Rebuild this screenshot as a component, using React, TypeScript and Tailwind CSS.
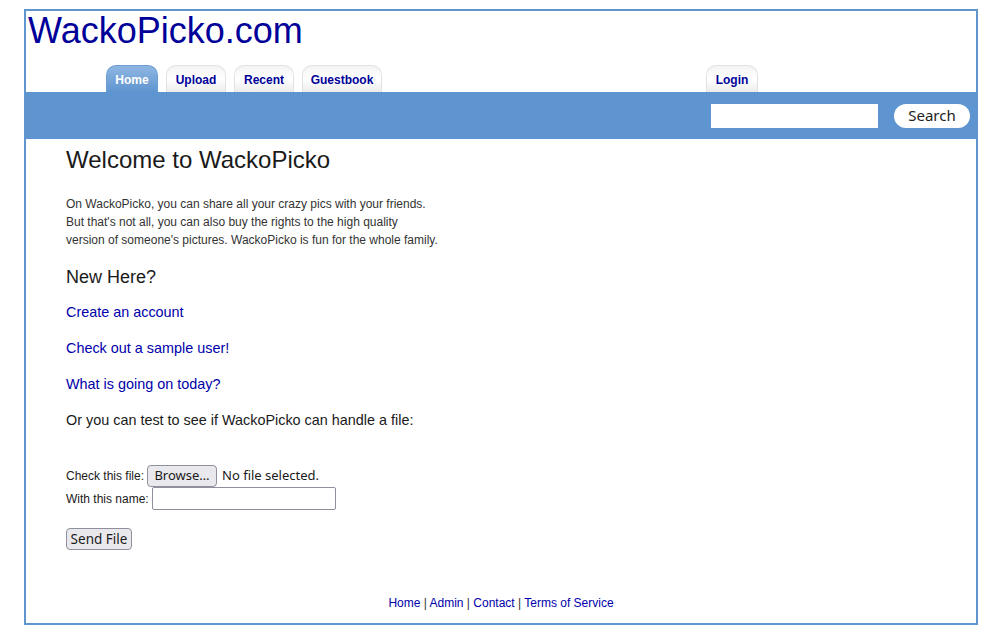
import React from "react";

const sans = { fontFamily: '"Liberation Sans", Arial, sans-serif' };
const ui = { fontFamily: '"Noto Sans", "Open Sans", sans-serif' };

function Tab({ label, active, w }: { label: string; active?: boolean; w: string }) {
  return (
    <div
      className={
        "h-[27px] rounded-t-[10px] flex items-center justify-center text-[12px] font-bold border border-b-0 " +
        w +
        " " +
        (active
          ? "bg-gradient-to-b from-[#8fb6e2] to-[#5e95d0] text-white border-[#6e9fd4]"
          : "bg-gradient-to-b from-[#f4f4f4] via-white to-[#ececec] text-[#000099] border-[#e2e2e2]")
      }
      style={sans}
    >
      <span className="pt-[1px]">{label}</span>
    </div>
  );
}

export default function App() {
  return (
    <div className="bg-white min-h-[631px] pt-[9px] pl-[24px]" style={sans}>
      <div className="w-[954px] h-[616px] border-2 border-[#5f96d0] flex flex-col">
        {/* Header */}
        <div className="h-[81px] flex flex-col">
          <div className="text-[36px] leading-[40px] text-[#000099] pl-[2px]">WackoPicko.com</div>
          <div className="mt-auto flex items-end">
            <div className="ml-[80px] flex gap-[8px]">
              <Tab label="Home" active w="w-[52px]" />
              <Tab label="Upload" w="w-[60px]" />
              <Tab label="Recent" w="w-[60px]" />
              <Tab label="Guestbook" w="w-[80px]" />
            </div>
            <div className="ml-[324px]">
              <Tab label="Login" w="w-[52px]" />
            </div>
          </div>
        </div>

        {/* Blue bar */}
        <div className="h-[47px] bg-[#5e95d0] flex items-center justify-end pr-[6px] gap-[16px]">
          <div className="w-[167px] h-[24px] bg-white"></div>
          <div
            className="w-[76px] h-[24px] rounded-full bg-white flex items-center justify-center text-[15px] text-[#222]"
            style={ui}
          >
            Search
          </div>
        </div>

        {/* Content */}
        <div className="pl-[40px] pt-[7px] flex flex-col">
          <h1 className="text-[24px] leading-[28px] text-[#1a1a1a]">Welcome to WackoPicko</h1>
          <p className="mt-[21px] text-[12px] leading-[18px] text-[#333]">
            On WackoPicko, you can share all your crazy pics with your friends.
            <br />
            But that's not all, you can also buy the rights to the high quality
            <br />
            version of someone's pictures. WackoPicko is fun for the whole family.
          </p>
          <h2 className="mt-[18px] text-[18px] leading-[21px] text-[#1a1a1a]">New Here?</h2>
          <a className="mt-[16px] text-[14.4px] leading-[16px] text-[#0000aa] w-fit">Create an account</a>
          <a className="mt-[20px] text-[14.4px] leading-[16px] text-[#0000aa] w-fit">Check out a sample user!</a>
          <a className="mt-[20px] text-[14.4px] leading-[16px] text-[#0000aa] w-fit">What is going on today?</a>
          <p className="mt-[20px] text-[14.4px] leading-[16px] text-[#1a1a1a]">
            Or you can test to see if WackoPicko can handle a file:
          </p>

          <div className="mt-[37px] flex items-center h-[22px] text-[12px] text-[#1a1a1a]">
            <span>Check this file:</span>
            <span
              className="ml-[3px] w-[70px] h-[22px] border border-[#8f8f9d] bg-[#e9e9ed] rounded-[4px] flex items-center justify-center text-[13px] text-[#1a1a1a]"
              style={ui}
            >
              Browse…
            </span>
            <span className="ml-[5px] text-[13px] text-[#1a1a1a]" style={ui}>
              No file selected.
            </span>
          </div>
          <div className="flex items-center h-[23px] text-[12px] text-[#1a1a1a]">
            <span>With this name:</span>
            <span className="ml-[3px] w-[184px] h-[23px] border border-[#8f8f9d] rounded-[2px] bg-white"></span>
          </div>
          <div className="mt-[17px]">
            <span
              className="inline-flex w-[66px] h-[22px] border border-[#8f8f9d] bg-[#e9e9ed] rounded-[4px] items-center justify-center text-[13.5px] text-[#1a1a1a]"
              style={ui}
            >
              Send File
            </span>
          </div>
        </div>

        {/* Footer */}
        <div className="mt-auto pb-[13px] text-center text-[12px] leading-[14px] text-[#333]">
          <a className="text-[#0000aa]">Home</a> | <a className="text-[#0000aa]">Admin</a> |{" "}
          <a className="text-[#0000aa]">Contact</a> | <a className="text-[#0000aa]">Terms of Service</a>
        </div>
      </div>
    </div>
  );
}
